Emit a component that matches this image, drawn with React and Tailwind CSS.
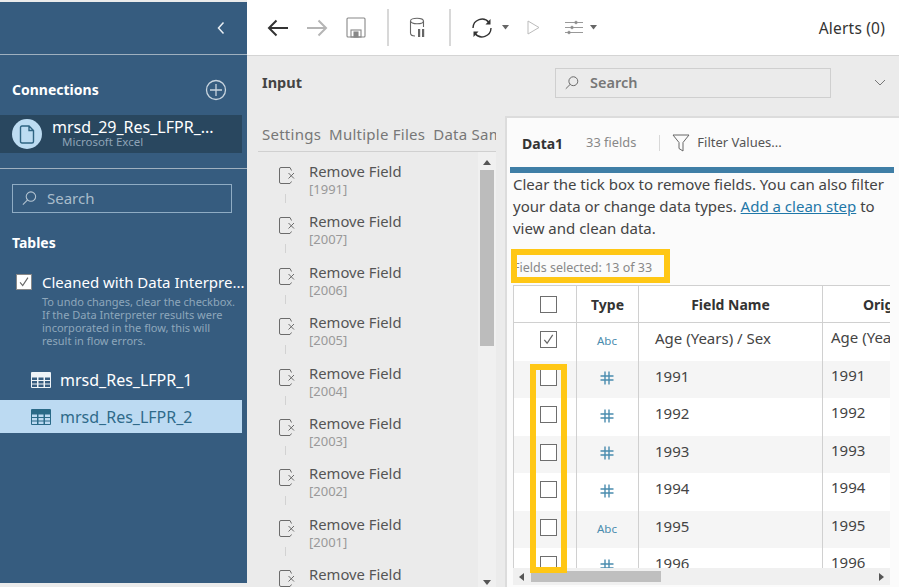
const years = ["1991","2007","2006","2005","2004","2003","2002","2001"];

function RemoveIcon() {
  return (
    <svg width="20" height="20" viewBox="0 0 20 20" fill="none" stroke="#6b6b6b" strokeWidth="1" className="shrink-0">
      <path d="M13.5 4.5 L12 1.5 H3 Q1.5 1.5 1.5 3 V16 Q1.5 17.5 3 17.5 H12 L13.5 15.5" />
      <path d="M10.5 7 L16 12.5 M16 7 L10.5 12.5" />
    </svg>
  );
}

function TableIcon({ color, bg }) {
  return (
    <svg width="20" height="16" viewBox="0 0 20 16" className="shrink-0">
      <rect x="0" y="0" width="20" height="16" rx="1" fill={color} />
      {[5.5, 9, 12.5].map((y) => [1, 7.5, 14].map((x) => (
        <rect key={x + "-" + y} x={x} y={y} width="5" height="2.5" fill={bg} />
      )))}
    </svg>
  );
}

function SearchGlyph({ color, size = 18 }) {
  return (
    <svg width={size} height={size} viewBox="0 0 18 18" fill="none" stroke={color} strokeWidth="1.1" className="shrink-0">
      <circle cx="10.5" cy="7" r="5" />
      <path d="M7 10.5 L2 15.5" />
    </svg>
  );
}

function Check({ size = 16 }) {
  return (
    <svg width={size} height={size} viewBox="0 0 16 16" fill="none" stroke="#666" strokeWidth="1.3">
      <path d="M3.5 8.5 L6.5 12 L12.5 3" />
    </svg>
  );
}

function Box({ checked }) {
  return (
    <div className="w-[17px] h-[17px] border border-[#6e6e6e] bg-white flex items-center justify-center">
      {checked ? <Check size={15} /> : null}
    </div>
  );
}

function Hash() {
  return (
    <svg width="14" height="14" viewBox="0 0 14 14" fill="none" stroke="#4a8cae" strokeWidth="1.4">
      <path d="M5 0.5 V13.5 M9 0.5 V13.5 M0.5 5 H13.5 M0.5 9 H13.5" />
    </svg>
  );
}

const rows = [
  { t: "abc", a: "Age (Years) / Sex", b: "Age (Yea", check: true },
  { t: "num", a: "1991", b: "1991" },
  { t: "num", a: "1992", b: "1992" },
  { t: "num", a: "1993", b: "1993" },
  { t: "num", a: "1994", b: "1994" },
  { t: "abc", a: "1995", b: "1995" },
  { t: "num", a: "1996", b: "1996" },
];

function Sidebar() {
  return (
    <aside className="w-[247px] h-[581px] mt-[2px] shrink-0 bg-[#365c7f] text-white flex flex-col">
      <div className="h-[53px] border-b border-[#9fb0bf] flex items-center justify-end pr-[21px]">
        <svg width="10" height="14" viewBox="0 0 10 14" fill="none" stroke="#e8eef3" strokeWidth="1.5"><path d="M7.5 1.5 L2.5 7 L7.5 12.5" /></svg>
      </div>
      <div className="h-[60px] flex items-center justify-between pl-[12px] pr-[20px] pt-[9px]">
        <span className="text-[14px] font-bold">Connections</span>
        <svg width="22" height="22" viewBox="0 0 22 22" fill="none" stroke="#c9d5df" strokeWidth="1.3">
          <circle cx="11" cy="11" r="9.5" />
          <path d="M11 5 V17 M5 11 H17" />
        </svg>
      </div>
      <div className="w-[242px] h-[38px] bg-[#29475f] flex items-center pl-[12px]">
        <div className="w-[30px] h-[30px] rounded-full bg-[#bddcf2] flex items-center justify-center shrink-0">
          <svg width="16" height="19" viewBox="0 0 16 19" fill="none" stroke="#2f6483" strokeWidth="1.4">
            <path d="M1.5 2.5 Q1.5 1 3 1 H10 L14.5 5.5 V16.5 Q14.5 18 13 18 H3 Q1.5 18 1.5 16.5 Z M10 1 V5.5 H14.5" />
          </svg>
        </div>
        <div className="ml-[10px] leading-none">
          <div className="text-[16px] leading-[17px] mt-[-1px] whitespace-nowrap">mrsd_29_Res_LFPR_...</div>
          <div className="text-[11.5px] leading-[12px] ml-[10px] text-[#8ea3b6]">Microsoft Excel</div>
        </div>
      </div>
      <div className="mt-[15px] border-t border-[#9fb0bf]" />
      <div className="mt-[15px] ml-[12px] w-[220px] h-[29px] border border-[#8facc4] flex items-center pl-[8px] gap-[9px] text-[15px] text-[#a9bccb]">
        <SearchGlyph color="#b5c5d2" size={17} />
        <span>Search</span>
      </div>
      <div className="mt-[21px] pl-[12px] text-[14px] font-bold leading-[18px]">Tables</div>
      <div className="mt-[21px] flex pl-[16px]">
        <div className="w-[16px] h-[16px] bg-white border border-[#888] flex items-center justify-center shrink-0 mt-[1px]"><Check size={14} /></div>
        <div className="ml-[10px] min-w-0">
          <div className="text-[15px] leading-[18px] whitespace-nowrap">Cleaned with Data Interpre...</div>
          <div className="mt-[4px] text-[11px] leading-[13px] text-[#8ea7bb] w-[200px]">
            <div className="whitespace-nowrap">To undo changes, clear the checkbox.</div>
            <div className="whitespace-nowrap">If the Data Interpreter results were</div>
            <div className="whitespace-nowrap">incorporated in the flow, this will</div>
            <div className="whitespace-nowrap">result in flow errors.</div>
          </div>
        </div>
      </div>
      <div className="mt-[16px] h-[33px] flex items-center pl-[31px] gap-[9px] text-[16px]">
        <TableIcon color="#eef3f7" bg="#365c7f" />
        <span>mrsd_Res_LFPR_1</span>
      </div>
      <div className="w-[242px] mt-[4px] h-[33px] flex items-center pl-[31px] gap-[9px] text-[16px] bg-[#bcdaf2] text-[#2f6a8a]">
        <TableIcon color="#2a6a88" bg="#bcdaf2" />
        <span>mrsd_Res_LFPR_2</span>
      </div>
    </aside>
  );
}

function Toolbar() {
  return (
    <header className="h-[56px] bg-white border-b border-[#d4d4d4] flex items-center pl-[20px] pr-[14px] shrink-0">
      <svg width="22" height="18" viewBox="0 0 22 18" fill="none" stroke="#333" strokeWidth="2"><path d="M21 9 H2 M9.5 1.5 L2 9 L9.5 16.5" /></svg>
      <svg className="ml-[17px]" width="22" height="18" viewBox="0 0 22 18" fill="none" stroke="#b5b5b5" strokeWidth="2"><path d="M1 9 H20 M12.5 1.5 L20 9 L12.5 16.5" /></svg>
      <svg className="ml-[18px]" width="20" height="21" viewBox="0 0 20 21" fill="none" stroke="#888" strokeWidth="1.1">
        <path d="M2 1 H18 Q19 1 19 2 V19 Q19 20 18 20 H2 Q1 20 1 19 V2 Q1 1 2 1 Z" />
        <rect x="5" y="13" width="10" height="7" />
        <rect x="8" y="15" width="4" height="5" fill="#888" />
      </svg>
      <div className="ml-[21px] w-[2px] h-[37px] bg-[#d8d8d8]" />
      <svg className="ml-[20px]" width="18" height="22" viewBox="0 0 18 22" fill="none" stroke="#666" strokeWidth="1.1">
        <ellipse cx="8" cy="4" rx="6.5" ry="2.8" />
        <path d="M1.5 4 V16 Q1.5 19 6 19 M14.5 4 V10" />
        <rect x="9" y="12" width="2.2" height="8" fill="#666" stroke="none" />
        <rect x="13" y="12" width="2.2" height="8" fill="#666" stroke="none" />
      </svg>
      <div className="ml-[22px] w-[2px] h-[37px] bg-[#d8d8d8]" />
      <svg className="ml-[20px]" width="22" height="22" viewBox="0 0 22 22" fill="none" stroke="#333" strokeWidth="1.4">
        <path d="M2 11 A9 9 0 0 1 18 5.5 M20 11 A9 9 0 0 1 4 16.5" />
        <path d="M19.5 2 V7.5 H14.5 Z M2.5 20 V14.5 H7.5 Z" fill="#333" stroke="none" />
      </svg>
      <svg className="ml-[9px]" width="8" height="5" viewBox="0 0 8 5"><path d="M0 0 H7 L3.5 4.5 Z" fill="#666" /></svg>
      <svg className="ml-[17px]" width="13" height="15" viewBox="0 0 13 15" fill="none" stroke="#bbb" strokeWidth="1"><path d="M1 1 L12 7.5 L1 14 Z" /></svg>
      <svg className="ml-[25px]" width="18" height="15" viewBox="0 0 18 15" fill="none" stroke="#999" strokeWidth="1">
        <path d="M0 2.5 H18 M0 7.5 H18 M0 12.5 H18" />
        <circle cx="11" cy="2.5" r="1.3" fill="#888" /><circle cx="7" cy="7.5" r="1.3" fill="#888" /><circle cx="4" cy="12.5" r="1.3" fill="#888" />
      </svg>
      <svg className="ml-[7px]" width="8" height="5" viewBox="0 0 8 5"><path d="M0 0 H7 L3.5 4.5 Z" fill="#666" /></svg>
      <span className="ml-auto pt-[3px] text-[15.5px] tracking-[0.2px] text-[#333]">Alerts (0)</span>
    </header>
  );
}

function StepList() {
  return (
    <div className="w-[238px] ml-[11px] shrink-0 flex flex-col min-h-0">
      <div className="h-[36px] pl-[4px] pt-[1px] border-b border-[#d0d0d0] flex items-center gap-[8px] text-[15px] tracking-[0.25px] text-[#777] whitespace-nowrap overflow-hidden shrink-0">
        <span>Settings</span><span>Multiple Files</span><span>Data Sample</span>
      </div>
      <div className="flex flex-1 min-h-0">
        <div className="flex-1 overflow-hidden pt-[10px] pl-[20px] relative">
          {[...years, "2000"].map((y) => (
            <div key={y} className="h-[50.4px] flex">
              <div className="w-[31px] flex flex-col items-start pt-[4px] shrink-0">
                <RemoveIcon />
                <div className="ml-[7px] mt-[8px] w-px h-[9px] bg-[#d2d2d2]" />
              </div>
              <div>
                <div className="text-[14.8px] leading-[18px] text-[#555]">Remove Field</div>
                <div className="text-[13px] leading-[17px] mt-[1px] text-[#999]">[{y}]</div>
              </div>
            </div>
          ))}
        </div>
        <div className="w-[18px] bg-[#f0f0f0] flex flex-col items-center shrink-0">
          <svg className="mt-[8px]" width="8" height="5" viewBox="0 0 8 5"><path d="M0 5 H8 L4 0 Z" fill="#555" /></svg>
          <div className="mt-[5px] w-[14px] h-[176px] bg-[#bcbcbc]" />
          <svg className="mt-auto mb-[2px]" width="8" height="5" viewBox="0 0 8 5"><path d="M0 0 H8 L4 5 Z" fill="#555" /></svg>
        </div>
      </div>
    </div>
  );
}

function DataTable() {
  return (
    <div className="ml-[6px] w-[377px] flex-1 min-h-0 flex flex-col">
      <div className="flex-1 min-h-0 overflow-hidden border-l border-t border-[#d0d0d0] bg-white">
        <div className="flex h-[37px] border-b border-[#d0d0d0] text-[14px] font-bold text-[#333]">
          <div className="w-[63px] shrink-0 border-r border-[#d0d0d0] flex items-center justify-center pl-[6px]"><Box /></div>
          <div className="w-[62px] shrink-0 border-r border-[#d0d0d0] flex items-center justify-center">Type</div>
          <div className="w-[184px] shrink-0 border-r border-[#d0d0d0] flex items-center justify-center">Field Name</div>
          <div className="flex-1 flex items-center pl-[40px]">Orig</div>
        </div>
        {rows.map((r, i) => (
          <div key={i} className={"flex h-[37.5px] text-[15px] text-[#444] " + (i % 2 === 1 ? "bg-[#f5f5f5]" : "bg-white")}>
            <div className="w-[63px] shrink-0 border-r border-[#d0d0d0] flex items-center justify-center pl-[6px] pb-[4px]"><Box checked={r.check} /></div>
            <div className="w-[62px] shrink-0 border-r border-[#d0d0d0] flex items-center justify-center pb-[2px] pr-[1px] text-[11.5px] text-[#4a8cae]">
              {r.t === "abc" ? "Abc" : <Hash />}
            </div>
            <div className="w-[184px] shrink-0 border-r border-[#d0d0d0] flex items-center pl-[16px] pb-[7px]">{r.a}</div>
            <div className="flex-1 flex items-center pl-[8px] pb-[9px] whitespace-nowrap overflow-hidden">{r.b}</div>
          </div>
        ))}
      </div>
      <div className="h-[17px] mb-[2px] shrink-0 bg-[#f0f0f0] flex items-center">
        <svg className="ml-[6px]" width="5" height="8" viewBox="0 0 5 8"><path d="M5 0 V8 L0 4 Z" fill="#555" /></svg>
        <div className="ml-[7px] w-[130px] h-[11px] bg-[#bfbfbf]" />
        <svg className="ml-auto mr-[6px]" width="5" height="8" viewBox="0 0 5 8"><path d="M0 0 V8 L5 4 Z" fill="#555" /></svg>
      </div>
    </div>
  );
}

function DataPanel() {
  return (
    <section className="flex-1 min-w-0 ml-[9px] bg-[#fbfbfb] border-l-2 border-t-2 border-[#dcdcdc] flex flex-col relative overflow-hidden">
      <div className="h-[49px] pl-[15px] pt-[1px] flex items-center shrink-0">
        <span className="text-[14px] font-bold text-[#333]">Data1</span>
        <span className="ml-[23px] text-[12.8px] text-[#888]">33 fields</span>
        <div className="ml-[23px] w-px h-[16px] bg-[#d8d8d8]" />
        <svg className="ml-[12px]" width="18" height="18" viewBox="0 0 18 18" fill="none" stroke="#666" strokeWidth="1"><path d="M1 1 H17 L11 8.5 V17 L7 14.5 V8.5 Z" /></svg>
        <span className="ml-[7px] text-[13px] text-[#555]">Filter Values...</span>
      </div>
      <div className="ml-[3px] w-[384px] h-[6px] bg-[#3f7ea6] shrink-0" />
      <p className="ml-[6px] w-[384px] text-[15px] leading-[22px] text-[#444] shrink-0">
        Clear the tick box to remove fields. You can also filter your data or change data types. <span className="underline text-[#1f77a8]">Add a clean step</span> to view and clean data.
      </p>
      <div className="h-[46px] shrink-0 pl-[6px] pt-[20px] text-[12.5px] leading-[18px] text-[#888]">Fields selected: 13 of 33</div>
      <DataTable />
      <div className="absolute left-[4px] top-[131px] w-[159px] h-[34px] border-[6px] border-[#ffc715]" />
      <div className="absolute left-[23px] top-[246px] w-[37px] h-[209px] border-[6px] border-[#ffc715]" />
    </section>
  );
}

export default function App() {
  return (
    <div className="w-[899px] h-[587px] flex overflow-hidden bg-[#ebebeb]" style={{ fontFamily: '"Noto Sans", "Open Sans", sans-serif' }}>
      <Sidebar />
      <main className="flex-1 min-w-0 flex flex-col">
        <Toolbar />
        <div className="h-[60px] shrink-0 flex items-center pl-[15px] pb-[7px]">
          <span className="w-[40px] text-[14.5px] font-bold text-[#444]">Input</span>
          <div className="ml-[253px] w-[276px] h-[30px] border border-[#cfcfcf] flex items-center pl-[8px] gap-[10px] text-[14.5px] font-semibold text-[#777]">
            <SearchGlyph color="#666" size={16} />
            <span>Search</span>
          </div>
          <svg className="ml-[43px]" width="12" height="7" viewBox="0 0 12 7" fill="none" stroke="#777" strokeWidth="1"><path d="M1 1 L6 6 L11 1" /></svg>
        </div>
        <div className="flex-1 min-h-0 flex">
          <StepList />
          <DataPanel />
        </div>
      </main>
    </div>
  );
}
